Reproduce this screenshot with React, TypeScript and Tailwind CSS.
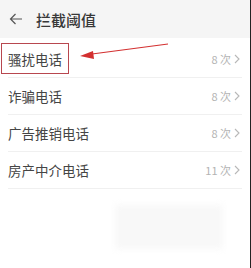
import React from 'react';

const rows = [
  { name: '骚扰电话', count: '8' },
  { name: '诈骗电话', count: '8' },
  { name: '广告推销电话', count: '8' },
  { name: '房产中介电话', count: '11' },
];

function Chevron() {
  return (
    <svg width="6" height="10" viewBox="0 0 6 10" className="ml-[3px]">
      <path d="M1 1 L5 5 L1 9" fill="none" stroke="#b8b8b8" strokeWidth="1.1" />
    </svg>
  );
}

export default function App() {
  return (
    <div
      className="relative w-[251px] h-[268px] bg-white overflow-hidden border-r border-[#222]"
      style={{ fontFamily: '"Noto Sans CJK SC", "Noto Sans", sans-serif' }}
    >
      {/* header */}
      <div className="h-[38px] bg-[#f5f5f5] flex items-center pl-[9px]">
        <svg width="14" height="12" viewBox="0 0 14 12">
          <path d="M13 6 H1.5 M6.5 1 L1.5 6 L6.5 11" fill="none" stroke="#555" strokeWidth="1.2" />
        </svg>
        <span className="ml-[13px] text-[15px] font-medium text-[#383838] leading-none">拦截阈值</span>
      </div>

      {/* list */}
      <div className="pt-[3px]">
        {rows.map((r) => (
          <div key={r.name} className="mx-[8px] h-[37px] flex items-center justify-between border-b border-[#f0f0f0]">
            <span className="text-[13.5px] text-[#454545]">{r.name}</span>
            <span className="flex items-center text-[11px] text-[#b3b3b3] mr-[2px]">
              {r.count} 次
              <Chevron />
            </span>
          </div>
        ))}
      </div>

      {/* highlight box */}
      <div className="absolute left-[1px] top-[43px] w-[68px] h-[31px] border border-[#b8474f]" />

      {/* arrow */}
      <svg className="absolute left-0 top-0" width="251" height="268">
        <line x1="168" y1="44" x2="92" y2="54" stroke="#d33030" strokeWidth="1.1" />
        <polygon points="80,56 93,51 94,59" fill="#d33030" />
      </svg>

      {/* faint watermark */}
      <div className="absolute left-[115px] top-[205px] w-[108px] h-[44px] bg-[#f8f8f8] blur-[3px]" />
    </div>
  );
}
